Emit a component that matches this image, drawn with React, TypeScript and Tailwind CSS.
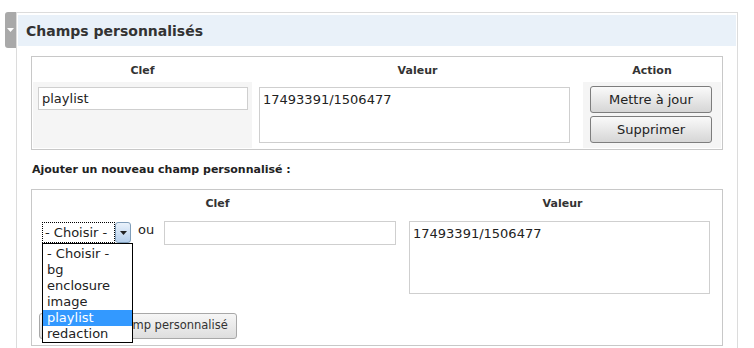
import React from "react";

const font = "font-['DejaVu_Sans','Verdana',sans-serif]";

const options = ["- Choisir -", "bg", "enclosure", "image", "playlist", "redaction"];

const ActionButton = ({ label }: { label: string }) => (
  <button className="w-[122px] h-[27px] rounded-[3px] border border-[#7d7d7d] bg-gradient-to-b from-[#fafafa] to-[#d6d6d6] text-[13px] text-[#222] leading-none">
    {label}
  </button>
);

const App = () => {
  return (
    <div className={`w-[754px] h-[348px] overflow-hidden bg-white text-[#222] ${font}`}>
      <div className="flex pl-[5px] pt-[12px] pr-[16px]">
        {/* collapse tab */}
        <div className="w-[11px] h-[36px] rounded-l-[3px] bg-[#a9a9a9] flex items-center justify-center">
          <svg width="7" height="4" viewBox="0 0 7 4">
            <path d="M0 0 L7 0 L3.5 4 Z" fill="#ffffff" />
          </svg>
        </div>

        {/* panel */}
        <div className="flex-1 h-[400px] border border-[#dcdcdc] border-b-0">
          <div className="mx-[1px] mt-[2px] h-[31px] bg-[#e9f1f9] flex items-center pl-[8px] pt-[1px]">
            <h2 className="text-[14px] font-bold text-[#333]">Champs personnalisés</h2>
          </div>

          {/* existing fields */}
          <div className="ml-[14px] mr-[14px] mt-[10px] border border-[#c8c8c8] pb-[1px]">
            <div className="flex h-[25px] items-center pt-[3px] text-[11px] font-bold text-[#333] px-[1px] gap-[2px]">
              <div className="w-[219px] text-center">Clef</div>
              <div className="w-[327px] text-center">Valeur</div>
              <div className="flex-1 text-center">Action</div>
            </div>
            <div className="flex h-[66px] px-[1px] gap-[2px]">
              <div className="w-[219px] bg-[#f5f5f5] pl-[5px] pt-[4px]">
                <input
                  readOnly
                  defaultValue="playlist"
                  className="w-[210px] h-[23px] border border-[#cfcfcf] bg-white pl-[3px] text-[13px] outline-none"
                />
              </div>
              <div className="w-[327px] pl-[5px] pt-[5px]">
                <textarea
                  readOnly
                  defaultValue="17493391/1506477"
                  className="w-[311px] h-[56px] border border-[#cfcfcf] bg-white pl-[3px] pt-[2px] text-[13px] resize-none outline-none"
                />
              </div>
              <div className="flex-1 bg-[#f5f5f5] pl-[7px] pt-[4px] flex flex-col gap-[3px]">
                <ActionButton label="Mettre à jour" />
                <ActionButton label="Supprimer" />
              </div>
            </div>
          </div>

          <p className="ml-[15px] mt-[13px] text-[11px] font-bold text-[#222] leading-[14px]">
            Ajouter un nouveau champ personnalisé :
          </p>

          {/* new field */}
          <div className="ml-[14px] mr-[14px] mt-[12px] border border-[#c8c8c8] pb-[6px]">
            <div className="flex h-[26px] items-center pt-[3px] text-[11px] font-bold text-[#333]">
              <div className="w-[371px] text-center">Clef</div>
              <div className="flex-1 text-center">Valeur</div>
            </div>
            <div className="flex pt-[5px]">
              <div className="w-[371px] pl-[10px] flex items-start">
                <div className="relative mt-[1px]">
                  <div className="flex h-[21px] w-[89px]">
                    <div className="w-[73px] border border-dotted border-black pl-[2px] text-[13px] leading-[19px] whitespace-nowrap">
                      - Choisir -
                    </div>
                    <div className="w-[16px] rounded-[3px] border border-[#7f9db9] bg-gradient-to-b from-[#eaf2fb] to-[#b5cfec] flex items-center justify-center">
                      <svg width="7" height="4" viewBox="0 0 7 4">
                        <path d="M0 0 L7 0 L3.5 4 Z" fill="#222" />
                      </svg>
                    </div>
                  </div>
                  {/* open list */}
                  <ul className="absolute left-0 top-[21px] z-10 w-[91px] border border-black bg-white pt-[2px] text-[13px] leading-[16px]">
                    {options.map((o) => (
                      <li
                        key={o}
                        className={o === "playlist" ? "h-[16px] pl-[4px] bg-[#3399ff] text-white" : "h-[16px] pl-[4px]"}
                      >
                        {o}
                      </li>
                    ))}
                  </ul>
                </div>
                <span className="ml-[7px] text-[13px] leading-[16px] mt-[1px]">ou</span>
                <input
                  readOnly
                  className="ml-[10px] w-[232px] h-[24px] border border-[#cfcfcf] bg-white outline-none"
                />
              </div>
              <div className="flex-1 pl-[6px]">
                <textarea
                  readOnly
                  defaultValue="17493391/1506477"
                  className="w-[301px] h-[73px] border border-[#cfcfcf] bg-white pl-[3px] pt-[2px] text-[13px] resize-none outline-none"
                />
              </div>
            </div>
            <div className="pl-[7px] mt-[11px]">
              <button className="w-[198px] h-[26px] rounded-[3px] border border-[#a8a8a8] bg-gradient-to-b from-[#f6f6f6] to-[#dedede] text-[11.5px] text-[#333] whitespace-nowrap">
                Ajouter un champ personnalisé
              </button>
            </div>
          </div>
        </div>
      </div>
    </div>
  );
};

export default App;
